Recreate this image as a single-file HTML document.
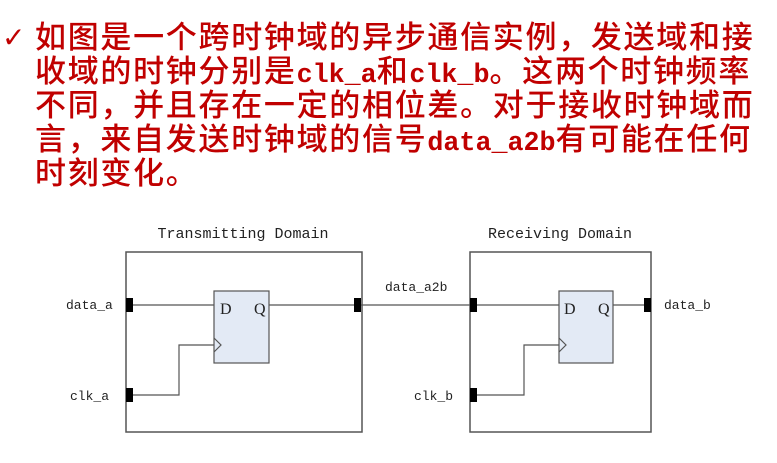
<!DOCTYPE html>
<html><head><meta charset="utf-8"><style>
body{margin:0;width:777px;height:463px;background:#fff;overflow:hidden;position:relative}
.l{position:absolute;left:35px;font:500 31px/34px "Liberation Sans","Noto Sans CJK SC",sans-serif;letter-spacing:1.7px;color:#c00000;white-space:nowrap}
.m{font-family:"Liberation Mono",monospace;font-size:26.7px;font-weight:bold;letter-spacing:0}
.chk{position:absolute;left:2px;top:21px;font:bold 28px/34px "DejaVu Sans",sans-serif;color:#c00000}
svg{position:absolute;left:0;top:0}
svg text{font-family:"Liberation Mono",monospace;font-size:13px;fill:#222}
svg text.t{font-size:15px}
svg text.q{font-family:"Liberation Serif",serif;font-size:16px}
</style></head><body>
<div class="chk">✓</div>
<div class="l" style="top:21px">如图是一个跨时钟域的异步通信实例，发送域和接</div>
<div class="l" style="top:55px">收域的时钟分别是<span class="m">clk_a</span>和<span class="m">clk_b</span>。这两个时钟频率</div>
<div class="l" style="top:89px">不同，并且存在一定的相位差。对于接收时钟域而</div>
<div class="l" style="top:123px">言，来自发送时钟域的信号<span class="m">data_a2b</span>有可能在任何</div>
<div class="l" style="top:157px">时刻变化。</div>
<svg width="777" height="463" viewBox="0 0 777 463">
<g fill="none" stroke="#555" stroke-width="1.5">
<rect x="126" y="252" width="236" height="180"/>
<rect x="470" y="252" width="181" height="180"/>
</g>
<g fill="#e3eaf5" stroke="#555" stroke-width="1.2">
<rect x="214" y="291" width="55" height="72"/>
<rect x="559" y="291" width="54" height="72"/>
</g>
<g fill="none" stroke="#555" stroke-width="1.2">
<path d="M133 305H214M269 305H354M361 305H470M477 305H559M613 305H644"/>
<path d="M133 395H179V345H214M477 395H524V345H559"/>
<path d="M214 338L221 345L214 352M559 338L566 345L559 352"/>
</g>
<g fill="#000">
<rect x="126" y="298" width="7" height="14"/><rect x="354" y="298" width="7" height="14"/>
<rect x="126" y="388" width="7" height="14"/>
<rect x="470" y="298" width="7" height="14"/><rect x="644" y="298" width="7" height="14"/>
<rect x="470" y="388" width="7" height="14"/>
</g>
<text class="t" x="243" y="238" text-anchor="middle">Transmitting Domain</text>
<text class="t" x="560" y="238" text-anchor="middle">Receiving Domain</text>
<text x="66" y="309">data_a</text>
<text x="70" y="400">clk_a</text>
<text x="385" y="291">data_a2b</text>
<text x="414" y="400">clk_b</text>
<text x="664" y="309">data_b</text>
<text class="q" x="220" y="314">D</text><text class="q" x="254" y="314">Q</text>
<text class="q" x="564" y="314">D</text><text class="q" x="598" y="314">Q</text>
</svg>
</body></html>
